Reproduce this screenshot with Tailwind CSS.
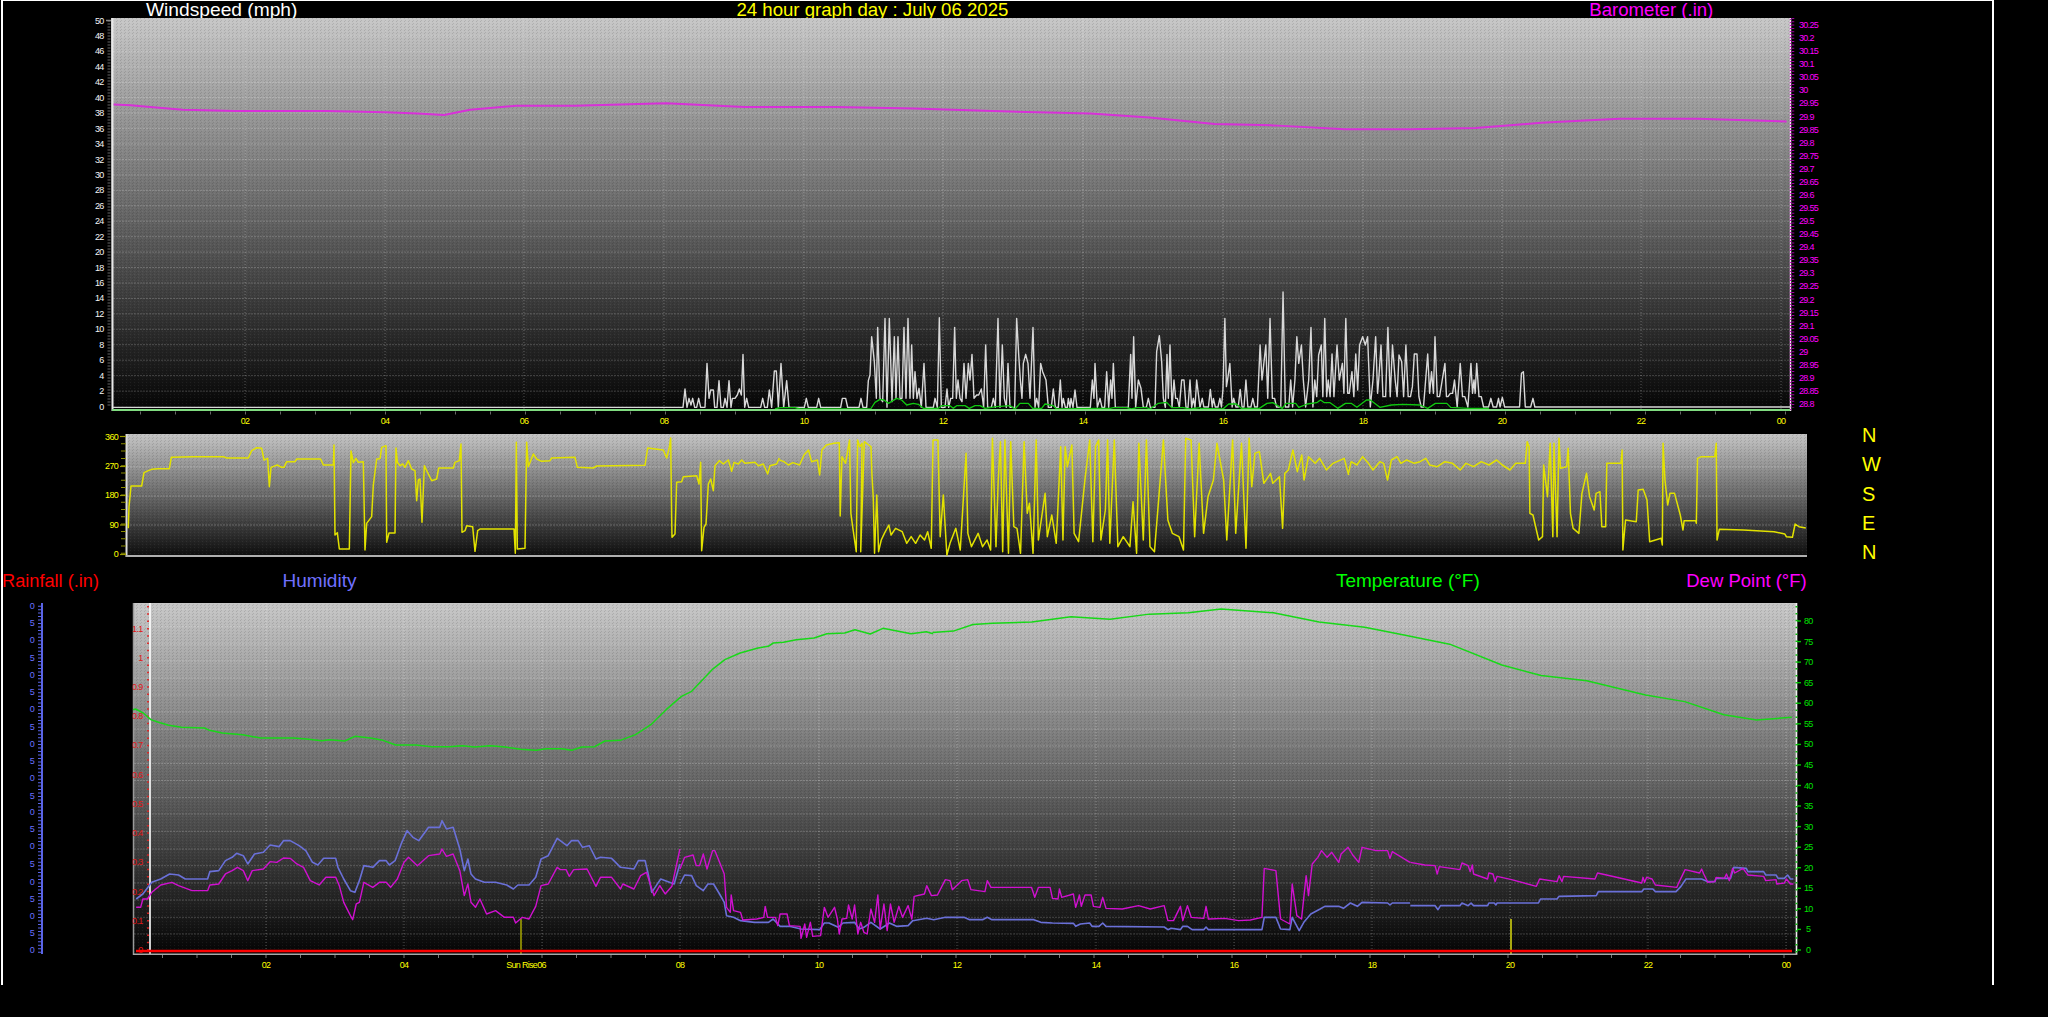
<!DOCTYPE html>
<html lang="en">
<head>
<meta charset="utf-8">
<title>24 hour graph</title>
<script src="https://cdn.jsdelivr.net/npm/@tailwindcss/browser@4"></script>
</head>
<body class="bg-black overflow-hidden h-[1017px] font-['Liberation_Sans',Arial,sans-serif]">
<svg width="0" height="0" class="absolute">
  <defs>
    <linearGradient id="g1" x1="0" y1="0" x2="0" y2="1"><stop offset="0" stop-color="#c8c8c8"/><stop offset="1" stop-color="#040404"/></linearGradient>
    <linearGradient id="g2" x1="0" y1="0" x2="0" y2="1"><stop offset="0" stop-color="#c4c4c4"/><stop offset="1" stop-color="#0c0c0c"/></linearGradient>
    <pattern id="dith" width="4" height="3" patternUnits="userSpaceOnUse"><rect x="0" y="0" width="1" height="1" fill="#000" fill-opacity=".12"/><rect x="2" y="1" width="1" height="1" fill="#fff" fill-opacity=".06"/><rect x="1" y="2" width="1" height="1" fill="#000" fill-opacity=".1"/></pattern>
  </defs>
</svg>
<div class="ml-px w-[1993px] h-[985px] border-t border-x-2 border-white overflow-hidden">

  <div class="flex h-[17px] text-[18.6px] leading-[18px] whitespace-nowrap">
    <span class="ml-[143px] text-[19.2px] text-white">Windspeed (mph)</span>
    <span class="ml-[439px] text-[#ffff00]">24 hour graph day : July 06 2025</span>
    <span class="ml-[581px] text-[#ff00ff]">Barometer (.in)</span>
  </div>

  <!-- Wind + barometer chart -->
  <svg class="block overflow-visible" width="1847" height="410" viewBox="3 18 1847 410" font-size="9" letter-spacing="-.7">
    <rect x="111" y="18" width="1680" height="393" fill="url(#g1)"/>
    <rect x="111" y="18" width="1680" height="393" fill="url(#dith)"/>
    <g stroke="#fff" stroke-opacity=".2" stroke-dasharray="2 1">
      <line x1="113" x2="1790" y1="35.9" y2="35.9"/><line x1="113" x2="1790" y1="51.4" y2="51.4"/><line x1="113" x2="1790" y1="66.8" y2="66.8"/><line x1="113" x2="1790" y1="82.3" y2="82.3"/><line x1="113" x2="1790" y1="97.7" y2="97.7"/><line x1="113" x2="1790" y1="113.1" y2="113.1"/><line x1="113" x2="1790" y1="128.6" y2="128.6"/><line x1="113" x2="1790" y1="144" y2="144"/><line x1="113" x2="1790" y1="159.5" y2="159.5"/><line x1="113" x2="1790" y1="174.9" y2="174.9"/><line x1="113" x2="1790" y1="190.3" y2="190.3"/><line x1="113" x2="1790" y1="205.8" y2="205.8"/><line x1="113" x2="1790" y1="221.2" y2="221.2"/><line x1="113" x2="1790" y1="236.7" y2="236.7"/><line x1="113" x2="1790" y1="252.1" y2="252.1"/><line x1="113" x2="1790" y1="267.5" y2="267.5"/><line x1="113" x2="1790" y1="283" y2="283"/><line x1="113" x2="1790" y1="298.4" y2="298.4"/><line x1="113" x2="1790" y1="313.9" y2="313.9"/><line x1="113" x2="1790" y1="329.3" y2="329.3"/><line x1="113" x2="1790" y1="344.7" y2="344.7"/><line x1="113" x2="1790" y1="360.2" y2="360.2"/><line x1="113" x2="1790" y1="375.6" y2="375.6"/><line x1="113" x2="1790" y1="391.1" y2="391.1"/>
    </g>
    <g stroke="#fff" stroke-opacity=".3" stroke-dasharray="1 2">
      <line x1="245" x2="245" y1="18" y2="411"/><line x1="385" x2="385" y1="18" y2="411"/><line x1="524" x2="524" y1="18" y2="411"/><line x1="664" x2="664" y1="18" y2="411"/><line x1="804" x2="804" y1="18" y2="411"/><line x1="943" x2="943" y1="18" y2="411"/><line x1="1083" x2="1083" y1="18" y2="411"/><line x1="1223" x2="1223" y1="18" y2="411"/><line x1="1363" x2="1363" y1="18" y2="411"/><line x1="1502" x2="1502" y1="18" y2="411"/><line x1="1641" x2="1641" y1="18" y2="411"/><line x1="1781" x2="1781" y1="18" y2="411"/>
    </g>
    <!-- axis frames -->
    <line x1="112.5" x2="112.5" y1="18" y2="411" stroke="#e8e8e8" stroke-width="2"/>
    <line x1="1790.5" x2="1790.5" y1="18" y2="411" stroke="#f0e0f0" stroke-width="1.5"/>
    <line x1="1790.5" x2="1790.5" y1="19" y2="411" stroke="#d000d0" stroke-width="1.5" stroke-dasharray="1 2"/>
    <line x1="109" x2="109" y1="20.5" y2="407" stroke="#666" stroke-width="3" stroke-dasharray="1 2"/>
    <line x1="106" x2="111" y1="20.5" y2="20.5" stroke="#888" stroke-width="1.5"/>
    <line x1="140" x2="1791" y1="413" y2="413" stroke="#666" stroke-width="3" stroke-dasharray="1 34"/>
    <line x1="1793" x2="1793" y1="18" y2="408" stroke="#a000a0" stroke-width="2.5" stroke-dasharray="1 2.3"/>
    <!-- barometer -->
    <g transform="scale(1.306)">
      <polyline vector-effect="non-scaling-stroke" fill="none" stroke="#d830d8" stroke-width="2" stroke-linejoin="round" points="87,80 100,80.5 115,82 140,84 180,85 215,85 250,85 295,86 320,87 340,88 360,84 395,81 440,81 510,79 570,82 640,82 700,83 760,85 835,87 880,90 930,95 975,96 1030,99 1080,99 1130,98 1180,94 1240,91 1300,91 1368,93"/>
    </g>
    <!-- wind speed -->
    <g transform="translate(680 285) scale(.33333)">
      <polyline vector-effect="non-scaling-stroke" fill="none" stroke="#d8d8d8" stroke-width="1.4" stroke-linejoin="round" points="-1701,367 9,367 15,312 21,367 27,340 33,360 38,340 44,367 50,367 56,340 62,367 75,367 81,235 87,340 92,315 100,315 104,367 111,367 117,287 123,367 130,367 135,340 141,367 147,287 153,367 157,340 165,340 172,330 178,312 184,330 189,208 194,367 200,340 206,367 242,367 248,340 254,367 262,367 268,315 275,367 283,258 289,258 295,367 303,235 311,367 320,287 327,367 373,367 379,340 385,367 410,367 416,340 422,367 482,367 487,340 497,340 503,367 537,367 543,340 549,367 560,367 565,287 570,270 575,155 583,230 589,340 593,127 600,340 608,350 615,100 621,367 628,100 636,350 643,155 648,340 654,155 660,340 666,340 672,127 678,340 684,100 690,340 695,180 700,340 705,260 711,340 717,310 724,367 732,235 738,367 760,367 765,340 772,367 778,98 784,367 795,367 801,312 806,367 812,340 818,340 824,127 829,340 834,285 840,340 846,350 852,235 858,340 865,235 870,285 876,208 882,340 890,330 896,330 904,312 911,367 917,180 923,367 934,367 940,340 946,367 954,100 960,367 967,180 973,340 979,367 984,235 990,367 1004,367 1010,100 1016,208 1021,285 1026,340 1030,235 1037,208 1044,235 1050,340 1059,127 1065,367 1070,340 1076,367 1082,235 1088,260 1098,285 1105,367 1114,367 1120,312 1126,367 1135,367 1141,285 1146,367 1150,340 1156,367 1162,367 1165,340 1170,367 1173,340 1179,367 1185,315 1191,367 1231,367 1237,285 1242,340 1245,235 1252,367 1260,340 1266,367 1274,367 1280,260 1286,367 1292,285 1296,340 1300,235 1306,367 1345,367 1352,208 1356,340 1361,155 1367,367 1375,285 1383,310 1390,367 1399,367 1405,340 1411,367 1425,367 1430,200 1438,152 1445,230 1450,340 1456,367 1461,208 1465,340 1470,180 1476,367 1482,285 1487,340 1492,340 1498,367 1505,285 1512,285 1518,367 1524,367 1530,285 1535,367 1540,340 1545,367 1550,285 1560,367"/>
      <polyline vector-effect="non-scaling-stroke" fill="none" stroke="#10c810" stroke-width="1.3" stroke-linejoin="round" points="285,372 300,368 345,368 360,372 572,372 585,352 600,343 612,345 625,355 650,340 665,345 680,360 700,355 715,358 730,370 775,370 785,362 810,362 820,370 830,362 855,362 868,370 885,362 900,362 915,370 930,368 950,365 990,362 1005,372 1020,355 1045,355 1058,370 1085,370 1095,357 1120,362 1130,372 1245,370 1290,370 1300,368 1340,368 1355,372 1370,368 1400,368 1410,372 1435,355 1460,352 1475,368 1510,368 1530,372 1560,368"/>
    </g>
    <g transform="translate(1200 280) scale(.3827 .33333)">
      <polyline vector-effect="non-scaling-stroke" fill="none" stroke="#d8d8d8" stroke-width="1.4" stroke-linejoin="round" points="0,381 6,355 10,381 22,381 27,328 32,381 35,355 40,381 47,381 52,355 56,381 60,328 65,115 69,320 72,300 78,250 84,381 88,355 94,381 100,381 105,328 110,381 115,381 120,300 125,381 133,381 138,355 143,381 150,381 157,195 162,300 165,270 172,195 177,355 183,115 189,355 195,355 200,381 205,381 211,381 217,36 223,381 232,381 237,300 242,381 248,300 253,170 258,250 265,195 270,300 276,381 284,300 290,142 295,381 300,300 305,350 310,225 317,195 321,350 326,115 331,350 335,300 340,350 345,222 350,350 358,195 364,300 372,250 376,340 381,115 386,340 390,340 397,275 402,350 407,222 412,330 417,195 425,170 432,195 438,170 445,381 452,300 459,170 464,340 467,300 473,195 478,350 485,350 491,142 497,350 503,195 510,300 515,350 520,225 527,245 532,350 538,195 544,350 550,350 555,320 560,222 567,222 572,350 578,381 584,381 595,222 600,340 605,275 610,340 614,170 620,350 626,350 633,300 640,250 644,350 648,350 654,340 660,340 665,300 672,381 680,250 686,350 692,350 700,381 708,250 712,340 716,300 719,340 723,250 729,350 735,350 741,381 754,381 760,355 766,381 775,381 780,355 784,381 790,352 796,381 835,381 840,280 845,275 850,381 864,381 870,355 875,381 1544,381"/>
      <polyline vector-effect="non-scaling-stroke" fill="none" stroke="#10c810" stroke-width="1.3" stroke-linejoin="round" points="0,385 60,387 75,372 95,372 108,385 155,385 175,370 190,368 215,385 225,370 250,370 258,382 280,372 305,368 315,360 325,368 340,368 360,385 380,370 395,370 410,382 435,360 445,360 470,382 500,375 530,373 575,375 595,385 615,370 645,370 655,382 700,385 755,385"/>
    </g>
    <line x1="112" x2="1790" y1="410" y2="410" stroke="#80dc80" stroke-width="2"/>
    <!-- left labels -->
    <g transform="translate(0 3)" fill="#f4f4f4" text-anchor="end">
      <text x="103.5" y="20.5">50</text><text x="103.5" y="35.9">48</text><text x="103.5" y="51.4">46</text><text x="103.5" y="66.8">44</text><text x="103.5" y="82.3">42</text><text x="103.5" y="97.7">40</text><text x="103.5" y="113.1">38</text><text x="103.5" y="128.6">36</text><text x="103.5" y="144">34</text><text x="103.5" y="159.5">32</text><text x="103.5" y="174.9">30</text><text x="103.5" y="190.3">28</text><text x="103.5" y="205.8">26</text><text x="103.5" y="221.2">24</text><text x="103.5" y="236.7">22</text><text x="103.5" y="252.1">20</text><text x="103.5" y="267.5">18</text><text x="103.5" y="283">16</text><text x="103.5" y="298.4">14</text><text x="103.5" y="313.9">12</text><text x="103.5" y="329.3">10</text><text x="103.5" y="344.7">8</text><text x="103.5" y="360.2">6</text><text x="103.5" y="375.6">4</text><text x="103.5" y="391.1">2</text><text x="103.5" y="406.5">0</text>
    </g>
    <!-- right labels -->
    <g transform="translate(0 3)" fill="#ff00ff">
      <text x="1799" y="25">30.25</text><text x="1799" y="38.1">30.2</text><text x="1799" y="51.1">30.15</text><text x="1799" y="64.2">30.1</text><text x="1799" y="77.3">30.05</text><text x="1799" y="90.4">30</text><text x="1799" y="103.4">29.95</text><text x="1799" y="116.5">29.9</text><text x="1799" y="129.6">29.85</text><text x="1799" y="142.6">29.8</text><text x="1799" y="155.7">29.75</text><text x="1799" y="168.8">29.7</text><text x="1799" y="181.8">29.65</text><text x="1799" y="194.9">29.6</text><text x="1799" y="208">29.55</text><text x="1799" y="221.1">29.5</text><text x="1799" y="234.1">29.45</text><text x="1799" y="247.2">29.4</text><text x="1799" y="260.3">29.35</text><text x="1799" y="273.3">29.3</text><text x="1799" y="286.4">29.25</text><text x="1799" y="299.5">29.2</text><text x="1799" y="312.5">29.15</text><text x="1799" y="325.6">29.1</text><text x="1799" y="338.7">29.05</text><text x="1799" y="351.8">29</text><text x="1799" y="364.8">28.95</text><text x="1799" y="377.9">28.9</text><text x="1799" y="391">28.85</text><text x="1799" y="404">28.8</text>
    </g>
    <!-- hour labels -->
    <g fill="#ffff00" text-anchor="middle">
      <text x="245" y="424">02</text><text x="385" y="424">04</text><text x="524" y="424">06</text><text x="664" y="424">08</text><text x="804" y="424">10</text><text x="943" y="424">12</text><text x="1083" y="424">14</text><text x="1223" y="424">16</text><text x="1363" y="424">18</text><text x="1502" y="424">20</text><text x="1641" y="424">22</text><text x="1781" y="424">00</text>
    </g>
  </svg>

  <!-- Wind direction row -->
  <div class="flex h-[141px]">
    <svg class="block shrink-0 overflow-visible" width="1855" height="141" viewBox="3 428 1855 141" font-size="9" letter-spacing="-.7">
      <rect x="126" y="434" width="1681" height="123" fill="url(#g2)"/>
      <rect x="126" y="434" width="1681" height="123" fill="url(#dith)"/>
      <g stroke="#fff" stroke-opacity=".25" stroke-dasharray="2 1">
        <line x1="127" x2="1807" y1="467" y2="467"/><line x1="127" x2="1807" y1="496" y2="496"/><line x1="127" x2="1807" y1="525" y2="525"/>
      </g>
      <line x1="126.5" x2="126.5" y1="434" y2="557" stroke="#dcdcdc" stroke-width="2"/>
      <line x1="126" x2="1807" y1="556" y2="556" stroke="#b0b0b0" stroke-width="2"/>
      <line x1="123.5" x2="123.5" y1="436" y2="556" stroke="#8c8c00" stroke-width="5" stroke-dasharray="1 6.3"/>
      <g stroke="#9a9a00" stroke-width="1.2"><line x1="120" x2="126" y1="436.5" y2="436.5"/><line x1="120" x2="126" y1="466.5" y2="466.5"/><line x1="120" x2="126" y1="495.5" y2="495.5"/><line x1="120" x2="126" y1="525" y2="525"/><line x1="120" x2="126" y1="554.5" y2="554.5"/></g>
      <g transform="translate(0 3)" fill="#ffff00" text-anchor="end">
        <text x="118" y="436.5">360</text><text x="118" y="466">270</text><text x="118" y="495">180</text><text x="118" y="525">90</text><text x="118" y="554">0</text>
      </g>
      <g fill="none" stroke="#e2e200" stroke-width="1.5" stroke-linejoin="round">
        <g transform="translate(0 380) scale(.33333)">
          <polyline vector-effect="non-scaling-stroke" points="385,445 387,380 393,318 425,318 432,278 445,272 455,268 475,266 508,266 514,232 580,230 670,230 680,234 745,234 755,212 770,203 785,205 792,240 803,235 808,320 813,262 832,255 845,262 852,262 860,245 885,245 890,237 962,237 970,255 1000,255 1002,195 1005,465 1012,458 1018,507 1048,507 1053,213 1060,248 1068,235 1075,247 1090,245 1095,510 1100,430 1115,410 1120,315 1130,237 1140,236"/>
        </g>
        <g transform="translate(380 434) scale(.33333)">
          <polyline vector-effect="non-scaling-stroke" points="0,75 5,40 18,35 20,325 27,297 45,297 48,42 52,85 60,95 68,90 75,100 85,80 95,105 105,110 110,200 115,138 120,135 126,265 133,95 145,120 155,140 170,135 176,102 220,102 225,85 238,80 243,30 246,295 255,290 260,275 278,278 285,352 293,290 300,285 402,285 406,358 409,25 412,345 435,343 440,25 445,98 460,60 470,75 485,82 510,80 515,72 585,70 592,100 640,102 650,96 795,94 803,42 850,48 860,72 868,40 872,12 875,250 876,310 885,300 890,145 905,143 910,128 950,125 957,150 962,85 965,350 972,280 978,270 985,150 992,135 1000,170 1005,95 1018,80 1030,90 1045,78 1055,112 1062,85 1075,90 1085,78 1095,88 1125,85 1135,95 1150,90 1163,120 1170,95 1190,90 1198,72"/>
        </g>
        <g transform="translate(650 280) scale(.44643 .33333)">
          <polyline vector-effect="non-scaling-stroke" points="290,540 300,545 310,555 320,548 335,555 345,525 355,510 362,545 375,540 380,585 385,510 395,495 412,490 424,488 426,708 430,530 438,550 447,480 450,700 455,750 462,815 465,480 470,500 475,490 472,815 480,485 490,495 495,500 497,580 500,650 503,820 508,645 512,815 518,780 525,760 535,735 540,765 550,745 565,755 575,790 585,770 595,790 605,765 615,780 622,755 630,805 634,480 645,480 650,770 657,645 665,825 672,790 685,745 695,810 708,520 712,760 720,800 735,760 745,800 755,780 763,810 767,475 775,800 780,600 785,485 790,815 795,480 800,700 803,820 808,485 815,740 822,745 830,820 838,485 845,700 850,670 858,820 865,480 870,780 885,640 890,770 900,705 910,790 920,500 925,780 930,500 935,560 945,495 950,760 960,785 975,590 985,480 992,785 998,500 1005,480 1010,780 1020,690 1025,480 1030,790 1040,480 1048,800 1060,770 1075,800 1082,665 1090,820 1095,490 1105,780 1112,480 1120,800 1130,815 1150,480 1160,720 1170,760 1185,770 1195,810 1200,475 1212,480 1220,770 1230,490 1240,760 1250,650 1262,600 1270,490 1285,600 1292,780 1305,480 1312,760 1325,490 1335,805 1342,475 1348,620 1355,520 1365,515 1375,610 1390,580 1395,610 1410,590 1417,745 1422,580 1430,570 1440,510 1450,575 1460,525 1465,600 1475,530 1490,550 1500,535 1515,570 1530,550 1555,535 1565,585"/>
        </g>
        <g transform="translate(1200 280) scale(.3827 .33333)">
          <polyline vector-effect="non-scaling-stroke" points="388,580 395,545 410,555 425,530 440,550 452,570 470,545 480,550 490,600 500,540 515,530 525,550 540,540 560,550 575,545 590,535 600,555 620,560 640,545 660,550 680,570 695,550 715,560 735,545 755,555 775,540 790,555 810,570 825,550 850,550 855,485 860,500 862,700 870,705 885,780 895,770 898,555 908,650 915,490 922,770 925,490 933,770 938,475 942,565 958,560 962,505 968,700 975,745 990,760 998,640 1010,580 1018,650 1030,690 1035,640 1045,635 1050,740 1060,740 1063,550 1100,550 1103,510 1105,810 1112,720 1140,725 1145,630 1158,628 1168,660 1175,785 1205,775 1208,795 1210,490 1215,600 1222,675 1228,640 1240,640 1255,705 1262,750 1265,722 1295,722 1297,730 1300,535 1310,530 1345,530 1349,490 1351,780 1357,748 1420,750 1500,755 1528,762 1532,770 1548,772 1555,732 1565,740 1583,744"/>
        </g>
      </g>
    </svg>
    <div class="-mt-[7px] ml-[4px] flex flex-col text-[20px] leading-[29.3px] text-[#ffff00]">
      <span>N</span><span>W</span><span>S</span><span>E</span><span>N</span>
    </div>
  </div>

  <div class="flex h-[33px] pt-[1px] text-[18.5px] leading-[22px] whitespace-nowrap">
    <span class="-ml-[1px] text-[18.2px] text-[#ff0000]">Rainfall (.in)</span>
    <span class="ml-[183.5px] text-[19px] text-[#7070ff]">Humidity</span>
    <span class="ml-[979.5px] text-[19px] text-[#00ff00]">Temperature (°F)</span>
    <span class="ml-[206.5px] text-[#ff00ff]">Dew Point (°F)</span>
  </div>

  <!-- Temperature, humidity, dew point, rain chart -->
  <svg class="block overflow-visible" width="1847" height="415" viewBox="3 603 1847 415" font-size="9" letter-spacing="-.7">
    <rect x="133" y="604" width="1664" height="352" fill="url(#g1)"/>
    <rect x="133" y="604" width="1664" height="352" fill="url(#dith)"/>
    <g stroke="#fff" stroke-opacity=".2" stroke-dasharray="2 1">
      <line x1="134" x2="1796" y1="610" y2="610"/><line x1="134" x2="1796" y1="627.5" y2="627.5"/><line x1="134" x2="1796" y1="645" y2="645"/><line x1="134" x2="1796" y1="662" y2="662"/><line x1="134" x2="1796" y1="679" y2="679"/><line x1="134" x2="1796" y1="696" y2="696"/><line x1="134" x2="1796" y1="713" y2="713"/><line x1="134" x2="1796" y1="730" y2="730"/><line x1="134" x2="1796" y1="747" y2="747"/><line x1="134" x2="1796" y1="764.5" y2="764.5"/><line x1="134" x2="1796" y1="781.5" y2="781.5"/><line x1="134" x2="1796" y1="798.5" y2="798.5"/><line x1="134" x2="1796" y1="815" y2="815"/><line x1="134" x2="1796" y1="832.3" y2="832.3"/><line x1="134" x2="1796" y1="850" y2="850"/><line x1="134" x2="1796" y1="866.7" y2="866.7"/><line x1="134" x2="1796" y1="884" y2="884"/><line x1="134" x2="1796" y1="901" y2="901"/><line x1="134" x2="1796" y1="918.3" y2="918.3"/><line x1="134" x2="1796" y1="935" y2="935"/>
    </g>
    <g stroke="#fff" stroke-opacity=".3" stroke-dasharray="1 2">
      <line x1="266" x2="266" y1="604" y2="956"/><line x1="404" x2="404" y1="604" y2="956"/><line x1="542" x2="542" y1="604" y2="956"/><line x1="680" x2="680" y1="604" y2="956"/><line x1="819" x2="819" y1="604" y2="956"/><line x1="957" x2="957" y1="604" y2="956"/><line x1="1096" x2="1096" y1="604" y2="956"/><line x1="1234" x2="1234" y1="604" y2="956"/><line x1="1372" x2="1372" y1="604" y2="956"/><line x1="1510" x2="1510" y1="604" y2="956"/><line x1="1648" x2="1648" y1="604" y2="956"/><line x1="1786" x2="1786" y1="604" y2="956"/>
    </g>
    <line x1="133.5" x2="133.5" y1="604" y2="956" stroke="#999" stroke-width="1.5"/>
    <line x1="150" x2="150" y1="604" y2="956" stroke="#fff" stroke-width="1.6"/>
    <line x1="1796.5" x2="1796.5" y1="604" y2="956" stroke="#f0f0f0" stroke-width="1.6"/>
    <line x1="1796.5" x2="1796.5" y1="607" y2="956" stroke="#10c010" stroke-width="2" stroke-dasharray="1.5 5.4"/>
    <line x1="148" x2="148" y1="607" y2="956" stroke="#e02020" stroke-width="1.8" stroke-dasharray="1.5 5.8"/>
    <g stroke="#00c000" stroke-width="1.4"><line x1="1797" x2="1801" y1="622" y2="622"/><line x1="1797" x2="1801" y1="642.6" y2="642.6"/><line x1="1797" x2="1801" y1="663.1" y2="663.1"/><line x1="1797" x2="1801" y1="683.7" y2="683.7"/><line x1="1797" x2="1801" y1="704.2" y2="704.2"/><line x1="1797" x2="1801" y1="724.8" y2="724.8"/><line x1="1797" x2="1801" y1="745.4" y2="745.4"/><line x1="1797" x2="1801" y1="765.9" y2="765.9"/><line x1="1797" x2="1801" y1="786.5" y2="786.5"/><line x1="1797" x2="1801" y1="807" y2="807"/><line x1="1797" x2="1801" y1="827.6" y2="827.6"/><line x1="1797" x2="1801" y1="848.2" y2="848.2"/><line x1="1797" x2="1801" y1="868.7" y2="868.7"/><line x1="1797" x2="1801" y1="889.3" y2="889.3"/><line x1="1797" x2="1801" y1="909.8" y2="909.8"/><line x1="1797" x2="1801" y1="930.4" y2="930.4"/><line x1="1797" x2="1801" y1="951" y2="951"/></g>
    <line x1="162" x2="1791" y1="957.5" y2="957.5" stroke="#777" stroke-width="3" stroke-dasharray="1 33.5"/>

    <!-- blue axis -->
    <line x1="42" x2="42" y1="604" y2="955" stroke="#5a64e6" stroke-width="2"/>
    <line x1="39.5" x2="39.5" y1="606.7" y2="955" stroke="#5a64e6" stroke-width="3" stroke-dasharray="1 2.46"/>
    <g transform="translate(0 3)" fill="#6a70ff" text-anchor="middle">
      <text x="32" y="606.7">0</text><text x="32" y="624">5</text><text x="32" y="641">0</text><text x="32" y="658.5">5</text><text x="32" y="675.7">0</text><text x="32" y="693">5</text><text x="32" y="710">0</text><text x="32" y="727.5">5</text><text x="32" y="744.7">0</text><text x="32" y="762">5</text><text x="32" y="779">0</text><text x="32" y="796.5">5</text><text x="32" y="813">0</text><text x="32" y="830">5</text><text x="32" y="847">0</text><text x="32" y="865">5</text><text x="32" y="882.7">0</text><text x="32" y="900">5</text><text x="32" y="917">0</text><text x="32" y="934.3">5</text><text x="32" y="951">0</text>
    </g>
    <!-- rain labels -->
    <g transform="translate(0 3)" fill="#e01818" text-anchor="end">
      <text x="142.5" y="630">1.1</text><text x="142.5" y="659">1</text><text x="142.5" y="688">0.9</text><text x="142.5" y="717">0.8</text><text x="142.5" y="746">0.7</text><text x="142.5" y="776">0.6</text><text x="142.5" y="805">0.5</text><text x="142.5" y="834">0.4</text><text x="142.5" y="863">0.3</text><text x="142.5" y="893">0.2</text><text x="142.5" y="922">0.1</text><text x="142.5" y="951">0</text>
    </g>
    <!-- temperature labels -->
    <g transform="translate(0 3)" fill="#00e000">
      <text x="1804" y="622">80</text><text x="1804" y="642.6">75</text><text x="1804" y="663.1">70</text><text x="1804" y="683.7">65</text><text x="1804" y="704.2">60</text><text x="1804" y="724.8">55</text><text x="1804" y="745.4">50</text><text x="1804" y="765.9">45</text><text x="1804" y="786.5">40</text><text x="1804" y="807">35</text><text x="1804" y="827.6">30</text><text x="1804" y="848.2">25</text><text x="1804" y="868.7">20</text><text x="1804" y="889.3">15</text><text x="1804" y="909.8">10</text><text x="1806" y="930.4">5</text><text x="1806" y="951">0</text>
    </g>
    <!-- sun markers -->
    <line x1="521" x2="521" y1="920" y2="956" stroke="#b4b400" stroke-width="1.4"/>
    <line x1="1511" x2="1511" y1="920" y2="956" stroke="#a8a810" stroke-width="2"/>
    <!-- temperature -->
    <g transform="translate(133 604) scale(.5102 .33333)">
      <polyline vector-effect="non-scaling-stroke" fill="none" stroke="#18d818" stroke-width="1.5" stroke-linejoin="round" points="0,320 5,318 20,330 35,350 50,358 70,367 95,373 140,375 150,382 175,390 215,395 250,405 315,405 340,408 370,413 385,410 415,414 435,400 465,405 490,412 515,426 555,426 585,431 620,431 645,428 670,432 700,428 730,432 760,439 790,442 810,437 840,437 860,442 880,432 905,431 925,414 955,412 985,395 1015,365 1045,320 1075,280 1095,265 1135,200 1160,170 1190,150 1225,135 1245,130 1255,120 1275,118 1300,110 1335,105 1360,92 1395,90 1415,80 1445,93 1470,76 1495,83 1525,92 1555,86 1568,92"/>
    </g>
    <g transform="scale(1.306)">
      <polyline vector-effect="non-scaling-stroke" fill="none" stroke="#18d818" stroke-width="1.5" stroke-linejoin="round" points="714,485 730,484 745,479 760,478 790,477 820,473 850,475 880,471 910,470 935,467 975,470 1010,477 1045,481 1075,487 1110,494 1150,510 1180,518 1215,522 1260,533 1290,538 1320,548 1345,552 1372,550"/>
    </g>
    <!-- humidity -->
    <g fill="none" stroke="#6a70d8" stroke-width="1.6" stroke-linejoin="round">
      <g transform="scale(.44643 .33333) translate(0 2400)">
        <polyline vector-effect="non-scaling-stroke" points="305,300 320,285 340,250 360,240 380,225 400,228 415,240 465,240 470,218 490,215 505,185 520,175 530,163 545,170 555,195 570,165 590,160 605,138 625,143 635,125 650,125 670,140 685,155 700,190 712,198 725,178 752,178 757,205 770,240 785,275 795,280 805,245 815,200 835,205 850,185 865,185 872,198 885,185 900,130 912,95 925,115 938,125 960,85 985,85 990,65 1000,90 1015,85 1030,150 1040,215 1048,180 1055,225 1065,240 1085,250 1110,250 1135,258 1150,270 1160,258 1185,258 1200,235 1212,180 1228,170 1248,118 1255,125 1270,140 1280,125 1295,125 1305,145 1320,140 1335,180 1345,175 1370,178 1390,205 1420,210 1430,185 1445,185 1452,225 1460,280 1470,260 1480,240 1510,255 1523,195"/>
      </g>
      <g transform="translate(680 820) scale(.46555 .33333)">
        <polyline vector-effect="non-scaling-stroke" points="0,195 10,168 25,170 35,200 50,215 60,195 72,195 85,225 95,250 100,290 115,295 130,305 160,310 190,310 200,300 215,322 235,322 260,330 300,332 310,312 320,312 340,325 350,312 375,310 385,330 395,325 410,310 430,330 450,312 465,322 490,320 500,305 530,298 545,302 570,295 610,295 622,302 650,302 660,295 670,302 760,302 775,310 800,312 845,313 850,322 860,315 880,312 885,322 900,322 908,312 915,322 1040,324 1048,332 1055,328 1075,332 1080,322 1090,322 1100,332 1125,332 1130,324 1135,332 1250,332 1255,295 1280,295 1290,330 1310,332 1315,295 1330,335 1340,310 1355,285 1375,270 1385,262 1415,262 1425,268 1440,252 1455,262 1465,250 1520,252 1525,258 1530,252 1568,252"/>
      </g>
      <g transform="translate(1400 800) scale(.41322 .33333)">
        <polyline vector-effect="non-scaling-stroke" points="25,320 85,320 92,332 98,320 145,320 150,312 165,320 172,312 178,320 212,320 215,312 228,312 232,318 235,312 335,312 340,300 380,300 385,292 475,290 480,278 585,278 590,270 612,270 618,278 668,278 680,262 692,240 730,240 745,248 762,248 765,238 800,238 808,205 838,208 842,218 880,218 885,228 910,228 915,238 930,238 938,228 945,240 952,240"/>
      </g>
    </g>
    <!-- dew point -->
    <g fill="none" stroke="#d010d0" stroke-width="1.4" stroke-linejoin="round">
      <g transform="scale(.44643 .33333) translate(0 2400)">
        <polyline vector-effect="non-scaling-stroke" points="305,325 315,325 320,300 330,300 340,280 360,258 385,250 400,260 430,275 465,275 470,258 490,255 505,225 520,215 532,205 545,215 555,245 565,215 590,210 605,188 620,190 635,177 650,178 665,195 680,205 695,245 715,258 730,235 752,235 760,260 770,310 785,350 790,362 798,315 805,310 815,250 835,265 850,250 865,250 875,265 890,240 905,190 915,175 935,200 960,170 985,165 990,150 1000,172 1015,165 1030,215 1040,290 1048,255 1055,310 1065,325 1075,300 1090,345 1110,335 1130,355 1150,355 1155,372 1170,355 1185,360 1200,322 1212,260 1228,255 1248,205 1255,212 1268,212 1275,232 1285,212 1315,210 1335,262 1345,235 1370,235 1390,270 1395,255 1420,270 1435,230 1448,220 1465,290 1478,260 1490,285 1505,262 1523,150"/>
      </g>
      <g transform="translate(680 820) scale(.46555 .33333)">
        <polyline vector-effect="non-scaling-stroke" points="0,150 10,115 28,108 35,140 42,140 50,105 58,150 70,95 75,95 85,130 95,165 100,265 108,280 110,228 115,275 130,280 135,303 165,300 180,295 183,262 188,295 205,295 210,320 215,285 230,285 235,320 258,322 260,358 268,315 272,355 280,310 285,352 302,350 310,265 318,295 332,265 338,300 342,345 348,300 358,298 362,258 370,300 375,258 382,345 388,310 395,340 402,345 410,270 418,310 425,228 430,330 438,255 445,335 452,255 460,310 470,262 478,295 490,260 498,300 503,232 525,225 530,200 540,230 553,228 570,182 580,185 585,212 605,185 618,182 625,212 655,218 660,185 668,205 755,205 762,235 770,205 795,205 800,238 812,240 815,210 820,235 845,225 850,265 858,228 862,262 870,228 883,228 888,262 902,265 908,235 915,268 950,270 985,260 1010,270 1040,260 1048,305 1060,305 1075,262 1080,305 1090,260 1098,295 1125,298 1130,262 1135,300 1170,298 1200,305 1225,303 1250,295 1255,148 1280,155 1290,300 1310,315 1315,195 1325,290 1335,300 1345,170 1350,230 1358,135 1370,115 1378,95 1390,115 1400,100 1415,130 1420,105 1435,85 1445,108 1458,130 1465,85 1495,95 1520,95 1525,118 1530,98 1568,130"/>
      </g>
      <g transform="translate(1400 800) scale(.41322 .33333)">
        <polyline vector-effect="non-scaling-stroke" points="25,190 60,198 85,200 90,225 95,203 145,212 150,192 165,200 170,218 175,198 178,225 212,240 215,222 225,225 230,248 235,232 270,242 330,262 338,240 380,248 385,230 392,248 396,232 472,240 478,222 500,228 585,252 588,235 592,250 597,235 610,240 618,258 670,265 675,250 690,212 725,222 730,210 735,225 745,250 762,248 765,235 785,238 790,225 797,245 805,208 810,222 830,208 842,228 880,232 885,245 910,242 912,255 930,252 935,240 945,255 952,255"/>
      </g>
    </g>
    <!-- rain line and bottom edge -->
    <line x1="133" x2="1797" y1="955.3" y2="955.3" stroke="#a8a8a8" stroke-width="1.6"/>
    <line x1="136" x2="1792" y1="952" y2="952" stroke="#ff0000" stroke-width="2.6"/>
    <!-- hour labels -->
    <g fill="#ffff00" text-anchor="middle">
      <text x="266" y="969">02</text><text x="404" y="969">04</text><text x="526" y="969">Sun Rise06</text><text x="680" y="969">08</text><text x="819" y="969">10</text><text x="957" y="969">12</text><text x="1096" y="969">14</text><text x="1234" y="969">16</text><text x="1372" y="969">18</text><text x="1510" y="969">20</text><text x="1648" y="969">22</text><text x="1786" y="969">00</text>
    </g>
  </svg>
</div>
</body>
</html>
